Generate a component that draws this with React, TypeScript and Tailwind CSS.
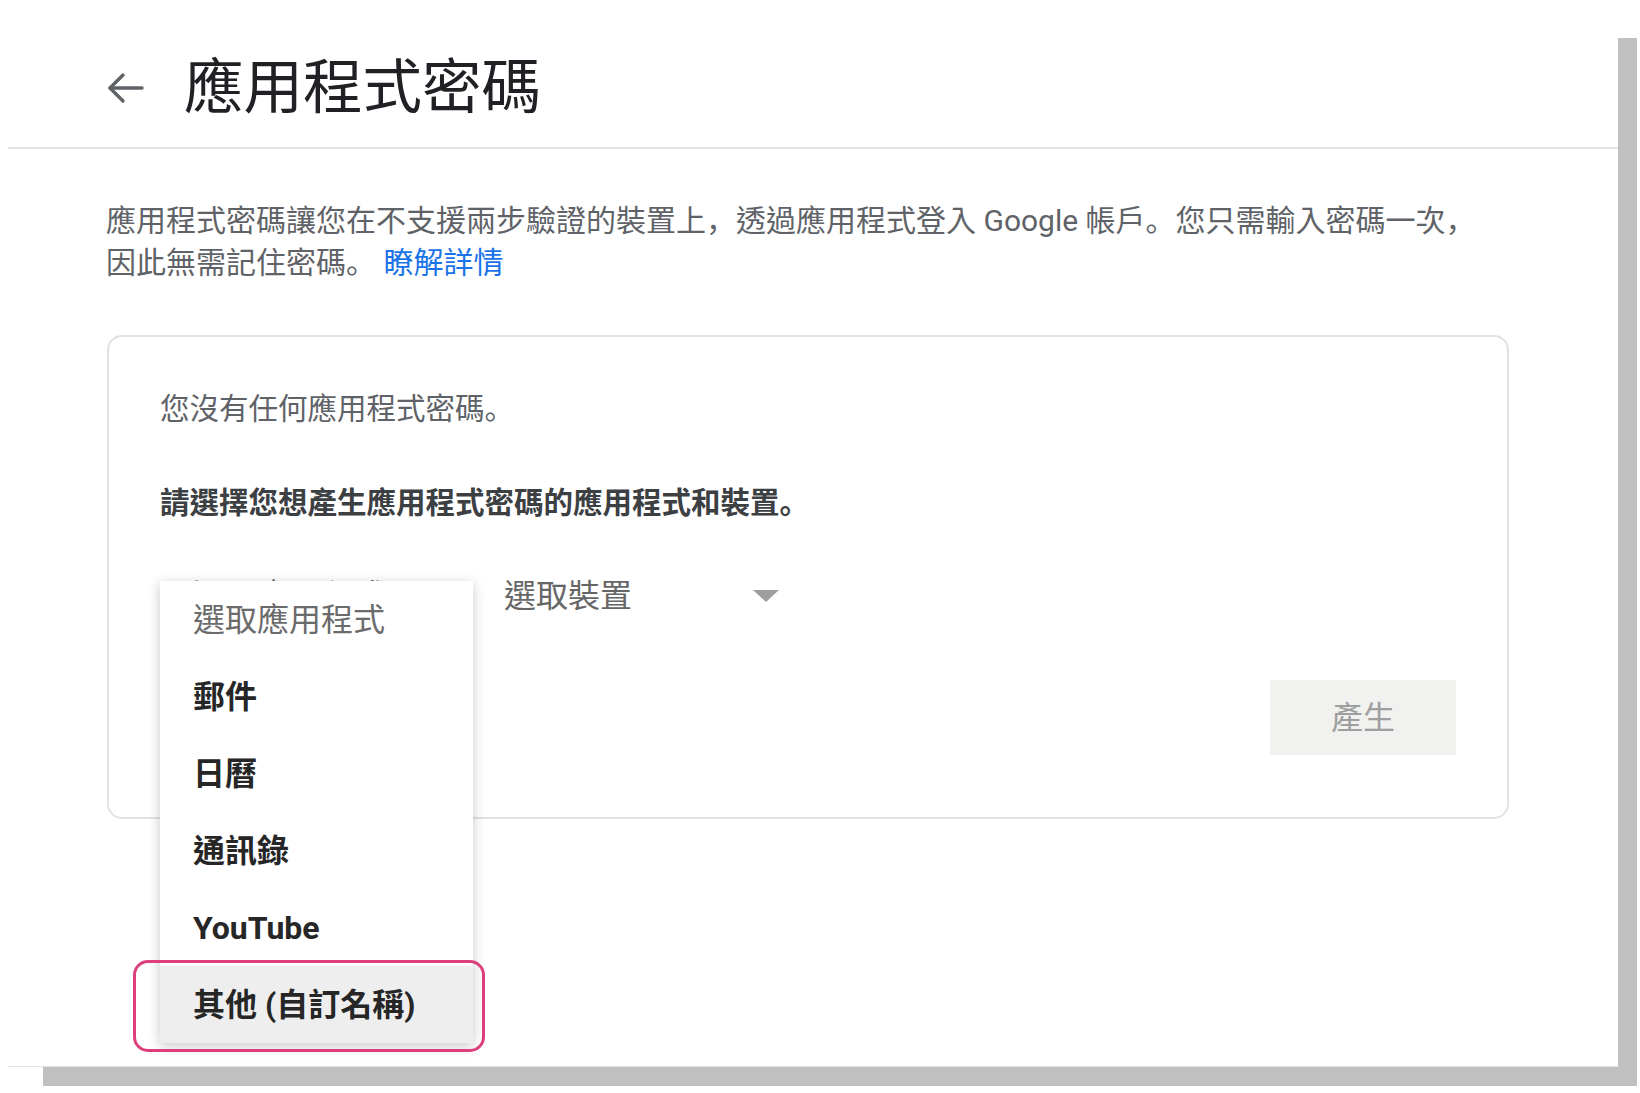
import React from "react";

const menuItems = ["郵件", "日曆", "通訊錄", "YouTube"];

function P({ c }: { c: string }) {
  return <span className="leading-[0px] font-['Noto_Sans_CJK_JP',sans-serif]">{c}</span>;
}

export default function App() {
  return (
    <div className="w-[1640px] h-[1093px] bg-white overflow-hidden font-[Roboto,'Noto_Sans_CJK_TC',sans-serif]">
      <div className="ml-[8px] mt-[3px] w-[1610px] h-[1064px] bg-white border-b border-[#e4e4e4] shadow-[27px_27px_0_-8px_#c0c0c0]">
        {/* Header */}
        <div className="h-[144px] pt-[26px] pl-[98px] flex items-center">
          <svg width="38" height="34" viewBox="0 0 38 34" fill="none" stroke="#5f6368" strokeWidth="3.4" strokeLinecap="round" strokeLinejoin="round">
            <path d="M36 17H4" />
            <path d="M17 4L4 17l13 13" />
          </svg>
          <h1 className="ml-[40px] text-[59.5px] leading-[70px] font-normal text-[#202124]">應用程式密碼</h1>
        </div>
        <div className="h-[2px] bg-[#e3e3e3]" />

        {/* Body */}
        <div className="pl-[98px]">
          <p className="mt-[51px] h-[84px] text-[30px] leading-[42px] text-[#5f6368] whitespace-nowrap">
            應用程式密碼讓您在不支援兩步驗證的裝置上<P c="，" />透過應用程式登入 Google 帳戶<P c="。" />您只需輸入密碼一次<P c="，" />
            <br />
            因此無需記住密碼<P c="。" /> <span className="text-[#1a73e8]">瞭解詳情</span>
          </p>

          <div className="mt-[51px] ml-[1px] w-[1402px] h-[484px] rounded-[15px] border-2 border-[#e2e2e2] pt-[51px] pl-[51px] pr-[51px]">
            <p className="h-[42px] text-[29.5px] leading-[42px] text-[#5f6368]">
              您沒有任何應用程式密碼<P c="。" />
            </p>
            <p className="mt-[52px] h-[42px] text-[29.5px] leading-[42px] font-bold text-[#3c4043]">
              請選擇您想產生應用程式密碼的應用程式和裝置<P c="。" />
            </p>

            <div className="mt-[47px] h-[50px] flex items-center">
              <div className="relative w-[312px] h-[50px] flex items-center pl-[33px]">
                <span className="text-[32px] leading-[40px] text-[#6b6b6b]">選取應用程式</span>
                <div className="absolute left-0 top-[10px] w-[313px] bg-white shadow-[0_3px_12px_rgba(0,0,0,0.22)] z-10">
                  <div className="h-[77px] flex items-center pl-[33px] text-[32px] text-[#6b6b6b]">選取應用程式</div>
                  {menuItems.map((m) => (
                    <div key={m} className="h-[77px] flex items-center pl-[33px] text-[32px] font-bold text-[#262626]">
                      {m}
                    </div>
                  ))}
                  <div className="relative h-[77px] flex items-center pl-[33px] text-[32px] font-bold text-[#262626] bg-[#eeeeee]">
                    其他 (自訂名稱)
                    <div className="absolute left-[-27px] right-[-12px] top-[-6px] bottom-[-9px] rounded-[15px] border-[3px] border-[#dd3f7d] pointer-events-none" />
                  </div>
                </div>
              </div>
              <div className="flex items-center pl-[32px] h-[50px]">
                <span className="text-[32px] leading-[40px] text-[#666666]">選取裝置</span>
                <svg className="ml-[121px]" width="26" height="12" viewBox="0 0 26 12">
                  <path d="M0 0h26L13 12z" fill="#9e9e9e" />
                </svg>
              </div>
            </div>

            <div className="mt-[59px] flex justify-end">
              <button className="w-[186px] h-[75px] bg-[#f1f1f0] text-[32px] text-[#9e9e9e] flex items-center justify-center">
                產生
              </button>
            </div>
          </div>
        </div>
      </div>
    </div>
  );
}
